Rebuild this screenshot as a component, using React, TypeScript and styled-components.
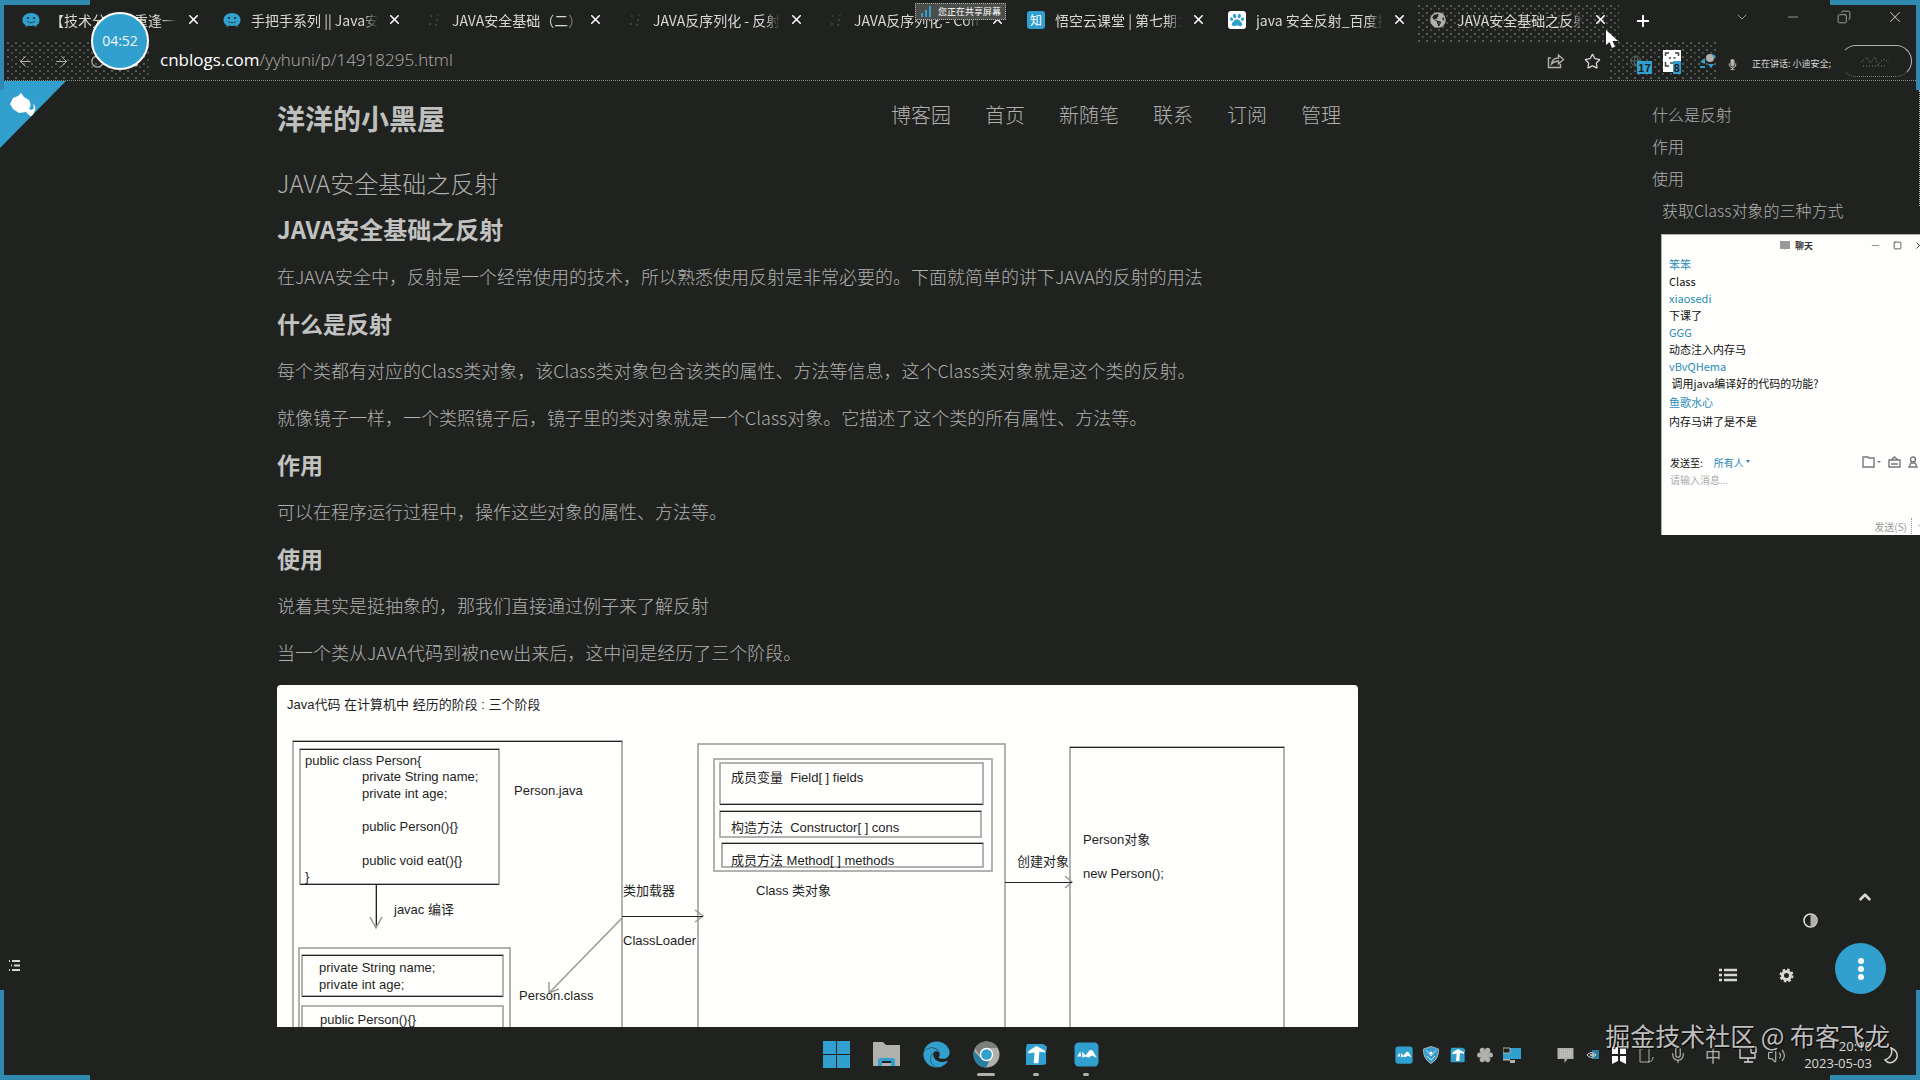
import React from "react";
import styled, { createGlobalStyle, css } from "styled-components";
import {
  ArrowLeft, ArrowRight, RotateCw, Lock, Plus, X, Minus, ChevronDown, ChevronUp, Copy, Star,
  Mic, Volume2, Globe, Square,
} from "lucide-react";
import { FaPaw, FaGlobeAmericas, FaEdge, FaMicrophone } from "react-icons/fa";

const bg = "#202220";
const gray = "#b0b1af";
const light = "#d8d9d7";
const blue = "#31a0cf";
const paper = "#fefefd";

const Global = createGlobalStyle`
  * { box-sizing: border-box; }
  body { margin: 0; background: ${bg}; overflow: hidden; font-family: "Noto Sans CJK SC", "Noto Sans", sans-serif; color: ${gray}; }
  button { border: 0; padding: 0; background: none; color: inherit; font: inherit; display: flex; align-items: center; justify-content: center; }
  a { color: inherit; text-decoration: none; }
  h1, h2, p, ul { margin: 0; padding: 0; list-style: none; }
  svg { flex: none; display: block; }
`;

const dots = css`
  background-image: radial-gradient(circle at 1px 1px, #6d6f6d 0.6px, transparent 1px), radial-gradient(circle at 5px 4px, #5a5c5a 0.6px, transparent 1px);
  background-size: 8px 7px;
`;

const Screen = styled.div`
  height: 100vh;
  display: flex;
  flex-direction: column;
  overflow: hidden;
`;

const TabBar = styled.div`
  display: flex;
  height: 42px;
  padding: 5px 0 0 11px;
`;
const Tab = styled.div<{ $active?: boolean }>`
  flex: 0 1 201px;
  min-width: 0;
  display: flex;
  align-items: center;
  padding: 0 11px 8px 11px;
  ${(p) => p.$active && dots}
`;
const Favicon = styled.span`
  width: 18px;
  height: 18px;
  margin-right: 10px;
  flex: none;
  display: flex;
  align-items: center;
  justify-content: center;
`;
const ZhiIcon = styled(Favicon)`
  background: ${blue};
  color: #fff;
  font-size: 12px;
  border-radius: 3px;
`;
const PawIcon = styled(Favicon)`
  background: #fff;
  color: ${blue};
  border-radius: 3px;
`;
const TabTitle = styled.button`
  flex: 1;
  min-width: 0;
  justify-content: flex-start;
  white-space: nowrap;
  overflow: hidden;
  font-size: 14px;
  line-height: 20px;
  color: ${light};
  mask-image: linear-gradient(90deg, #000 88%, transparent);
`;
const TabClose = styled.button`
  width: 16px;
  margin-left: 8px;
  color: #fff;
`;
const NewTab = styled.button`
  width: 36px;
  height: 31px;
  margin-left: 6px;
  color: #fff;
`;
const WindowButtons = styled.div`
  margin-left: auto;
  display: flex;
  height: 24px;
`;
const WindowButton = styled.button`
  width: 51px;
`;

const Toolbar = styled.div`
  height: 39px;
  flex: none;
  display: flex;
  align-items: center;
  padding-left: 16px;
  border-bottom: 1px dotted #8c8e8c;
`;
const ToolButton = styled.button<{ $w?: number }>`
  width: ${(p) => p.$w || 36}px;
  height: 24px;
  flex: none;
`;
const NavArea = styled.div`
  display: flex;
  width: 144px;
  height: 100%;
  align-items: center;
  margin-left: -9px;
  ${dots}
`;
const Address = styled.div`
  flex: 1;
  margin-left: 9px;
  padding-bottom: 2px;
  font-family: "Open Sans", "Noto Sans", sans-serif;
  font-size: 17px;
  line-height: 24px;
  font-weight: 300;
`;
const Domain = styled.span`
  color: #fff;
  font-weight: 400;
`;
const Extensions = styled.div`
  width: 106px;
  height: 100%;
  display: flex;
  align-items: center;
  gap: 18px;
  padding-left: 17px;
  ${dots}
`;
const ExtButton = styled.button`
  position: relative;
  width: 18px;
  height: 24px;
`;
const Badge = styled.span`
  position: absolute;
  left: 10px;
  top: 12px;
  padding: 0 1px;
  background: ${blue};
  color: ${bg};
  font-size: 11px;
  line-height: 13px;
  font-weight: 700;
`;
const Speaking = styled.div`
  width: 124px;
  display: flex;
  align-items: center;
  gap: 14px;
  padding: 6px 0 0 11px;
  font-size: 9px;
  line-height: 16px;
  color: ${light};
  white-space: nowrap;
`;
const UpdatePill = styled.button`
  width: 72px;
  height: 32px;
  margin-right: 8px;
  border: 1px solid ${gray};
  border-left-color: transparent;
  border-bottom: 1px dotted #777;
  border-radius: 16px;
`;

const Page = styled.main`
  flex: 1;
  min-height: 0;
  overflow: hidden;
  display: grid;
  grid-template-columns: 277px minmax(0, 1fr) 295px 267px;
  grid-template-rows: minmax(0, 100%);
`;
const LeftRail = styled.div`
  display: flex;
  flex-direction: column;
  justify-content: flex-end;
  padding-bottom: 54px;
`;
const RailButton = styled.button`
  width: 28px;
  height: 16px;
`;
const Content = styled.div`
  padding-top: 16px;
  min-width: 0;
`;
const BlogHeader = styled.header`
  display: flex;
  justify-content: space-between;
  padding-right: 17px;
`;
const BlogTitle = styled.a`
  font-size: 28px;
  line-height: 42px;
  font-weight: 700;
  color: #bfc0be;
`;
const BlogNav = styled.nav`
  display: flex;
  gap: 34px;
  font-size: 20px;
  line-height: 36px;
  font-weight: 300;
  height: 36px;
`;
const PostTitle = styled.h1`
  margin-top: 26px;
  font-size: 24px;
  line-height: 36px;
  font-weight: 300;
`;
const Article = styled.article`
  margin-top: 14px;
  display: flex;
  flex-direction: column;
  gap: 19px;
  font-size: 18px;
  line-height: 28px;
  font-weight: 300;
`;
const Heading = styled.h2<{ $large?: boolean }>`
  font-size: ${(p) => (p.$large ? 24 : 23)}px;
  line-height: 28px;
  font-weight: 700;
  color: #c2c3c1;
`;
const Figure = styled.svg`
  width: 1081px;
  height: 400px;
  background: ${paper};
  border-radius: 4px;
  font-family: "Liberation Sans", "Noto Sans CJK SC", sans-serif;
  font-size: 13px;
  font-weight: 400;
  text {
    fill: #1e1f1e;
    white-space: pre;
  }
`;
const Toc = styled.nav`
  grid-column: 4;
  padding-top: 17px;
  margin-left: -1px;
  font-size: 16px;
  line-height: 32px;
  font-weight: 300;
`;
const TocLink = styled.a<{ $sub?: boolean }>`
  display: block;
  padding-left: ${(p) => (p.$sub ? 10 : 0)}px;
`;

const Taskbar = styled.footer`
  height: 53px;
  flex: none;
  display: grid;
  grid-template-columns: 1fr auto 1fr;
`;
const Apps = styled.div`
  grid-column: 2;
  display: flex;
  padding-left: 2px;
`;
const AppButton = styled.button<{ $mark?: number }>`
  width: 50px;
  height: 53px;
  flex-direction: column;
  padding-top: 12px;
  justify-content: flex-start;
  color: ${blue};
  &::after {
    content: "";
    width: ${(p) => p.$mark || 0}px;
    height: 3px;
    margin-top: 4px;
    border-radius: 2px;
    background: ${gray};
  }
`;
const AppIcon = styled.span`
  height: 30px;
  display: flex;
  align-items: center;
`;
const Tray = styled.div`
  display: flex;
  justify-content: flex-end;
  align-items: center;
  padding: 3px 22px 0 0;
`;
const TrayGroup = styled.div<{ $gap: number; $end: number }>`
  display: flex;
  align-items: center;
  gap: ${(p) => p.$gap}px;
  margin-right: ${(p) => p.$end}px;
`;
const TrayButton = styled.button`
  width: 18px;
  height: 20px;
`;
const Clock = styled.div`
  width: 74px;
  margin-right: 12px;
  font-family: "Open Sans", sans-serif;
  font-size: 13px;
  line-height: 17px;
  text-align: right;
  color: ${light};
`;

const Ribbon = styled.a`
  position: absolute;
  left: 0;
  top: 81px;
  width: 66px;
  height: 67px;
  background: ${blue};
  clip-path: polygon(0 0, 100% 0, 0 100%);
  padding: 11px 0 0 9px;
`;
const Timer = styled.div`
  position: absolute;
  left: 91px;
  top: 12px;
  width: 58px;
  height: 58px;
  border: 2px solid #fff;
  border-radius: 50%;
  background: ${blue};
  color: #f2f6f8;
  font-family: "Open Sans", sans-serif;
  font-size: 14px;
  line-height: 54px;
  text-align: center;
`;
const ShareBadge = styled.div`
  position: absolute;
  left: calc(50% - 45px);
  top: 3px;
  width: 91px;
  height: 17px;
  display: flex;
  align-items: center;
  gap: 6px;
  padding-left: 5px;
  background: #4c4e4c;
  border: 1px dotted ${gray};
  color: #fff;
  font-size: 9px;
  line-height: 14px;
  white-space: nowrap;
`;
const Cursor = styled.svg`
  position: absolute;
  left: 1606px;
  top: 30px;
`;
const Corner = styled.span<{ $v: "top" | "bottom"; $h: "left" | "right" }>`
  position: absolute;
  ${(p) => p.$v}: 0;
  ${(p) => p.$h}: 0;
  width: 90px;
  height: 90px;
  border: 0 solid #2f89b0;
  border-${(p) => p.$v}-width: 5px;
  border-${(p) => p.$h}-width: 4px;
  pointer-events: none;
`;
const ScrollThumb = styled.span`
  position: absolute;
  right: 0;
  top: 90px;
  height: 116px;
  border-right: 1px dotted ${gray};
`;

const ChatWindow = styled.section`
  position: absolute;
  top: 234px;
  right: -12px;
  width: 271px;
  height: 301px;
  display: flex;
  flex-direction: column;
  background: ${paper};
  border-top: 1px solid ${gray};
  border-left: 1px solid ${gray};
  color: #111;
  font-size: 11px;
  line-height: 17px;
`;
const ChatHeader = styled.div`
  display: flex;
  align-items: center;
  height: 21px;
  padding-right: 2px;
  color: #333;
`;
const ChatTitle = styled.div`
  margin-left: 118px;
  margin-right: auto;
  display: flex;
  align-items: center;
  gap: 5px;
  font-size: 9px;
  font-weight: 700;
`;
const ChatControl = styled.button`
  width: 22px;
  height: 20px;
`;
const Messages = styled.ul`
  padding-left: 7px;
  flex: 1;
`;
const Message = styled.li<{ $loose?: boolean }>`
  line-height: ${(p) => (p.$loose ? 19 : 17)}px;
  padding-top: ${(p) => (p.$loose ? 1 : 0)}px;
`;
const Sender = styled.div`
  color: #2a8bb5;
`;
const SendRow = styled.div`
  display: flex;
  align-items: center;
  height: 20px;
  padding: 0 14px 0 8px;
  font-size: 10px;
`;
const Recipient = styled.select`
  appearance: none;
  border: 0;
  background: none;
  color: #2a8bb5;
  font: inherit;
  font-size: 10px;
  width: 32px;
  padding: 0;
  margin-left: 11px;
`;
const Caret = styled.span`
  border: 2px solid transparent;
  border-top: 3px solid #2a8bb5;
  margin-right: auto;
`;
const ChatIcons = styled.div`
  display: flex;
  gap: 7px;
  color: #777;
`;
const ChatInput = styled.textarea`
  border: 0;
  resize: none;
  height: 45px;
  padding: 0 8px;
  background: none;
  font: inherit;
  font-size: 10px;
  line-height: 16px;
  outline: 0;
  &::placeholder { color: #aaa; opacity: 1; }
`;
const SendBar = styled.div`
  display: flex;
  justify-content: flex-end;
  align-items: center;
  gap: 4px;
  height: 18px;
  padding-right: 6px;
  color: #999;
  font-size: 10px;
`;
const SendDivider = styled.span`
  height: 16px;
  border-left: 1px dotted #999;
`;

const FabPanel = styled.div`
  position: absolute;
  right: 34px;
  bottom: 85px;
  width: 170px;
  height: 112px;
`;
const Fab = styled.button<{ $x: number; $y: number }>`
  position: absolute;
  left: ${(p) => p.$x}px;
  top: ${(p) => p.$y}px;
  width: 24px;
  height: 24px;
  color: ${light};
`;
const MainFab = styled.button`
  position: absolute;
  right: 0;
  bottom: 1px;
  width: 51px;
  height: 51px;
  border-radius: 50%;
  background: ${blue};
`;
const Watermark = styled.div`
  position: absolute;
  right: 30px;
  bottom: 26px;
  font-size: 25px;
  line-height: 38px;
  color: rgba(214, 215, 214, 0.9);
  text-shadow: 1px 1px 1px #000;
  white-space: nowrap;
`;

const Blob = () => (
  <svg width="18" height="16" viewBox="0 0 18 16">
    <path d="M9 1c5 0 8.500 3 8.500 7 0 3-1.500 4.500-3 5v2l-3-1.500-2.500.5-2.500-.5L3.500 15v-2C1.500 12 .5 10.500.5 8 .5 4 4 1 9 1z" fill={blue} />
    <circle cx="6" cy="6" r="1" fill={bg} /><circle cx="12" cy="6" r="1" fill={bg} />
    <path d="M5 9.500q4 3 8 0" stroke={bg} strokeWidth=".7" fill="none" />
  </svg>
);
const Spinner = () => (
  <svg width="16" height="16" viewBox="0 0 16 16" fill="#666">
    <circle cx="6" cy="4" r=".7" /><circle cx="5" cy="12" r=".8" /><circle cx="12" cy="8" r=".8" /><circle cx="13" cy="3" r=".6" /><circle cx="11" cy="13" r=".8" />
  </svg>
);
const ShareIcon = () => (
  <svg width="18" height="16" viewBox="0 0 18 16" fill="none" stroke={gray} strokeWidth="1.400">
    <path d="M4 5H1.500v9.500h12V11M4.500 11c.5-4 3-6 7-6V2l5 4.500-5 4.500V8c-3 0-5 1-7 3z" />
  </svg>
);
const TLogo = ({ size }: { size: number }) => (
  <svg width={size} height={size} viewBox="0 0 24 24">
    <path d="M2 1h17l4 3-1 6v12q-2 1-5 1H1V6z" fill={blue} />
    <path d="M12 3l9 5v2l-6-1-1 12H9l1-11-7 1 1-3z" fill="#fff" />
  </svg>
);
const WaveLogo = ({ size }: { size: number }) => (
  <svg width={size} height={size} viewBox="0 0 24 24">
    <rect x=".5" y=".5" width="23" height="23" rx="4" fill={blue} />
    <path d="M3 14l3-5 1 5zM8 15V9l3 4 4-5q3-1 4 2l3 5-5-2-3 2-3-1z" fill="#fff" />
  </svg>
);
const FolderLogo = () => (
  <svg width="27" height="26" viewBox="0 0 27 26">
    <path d="M0 1h10l3 3h14v21H0z" fill={gray} />
    <path d="M5 25v-5q0-3 3-3h11q3 0 3 3v5h-4v-3H9v3z" fill={blue} /><path d="M9 20h9v2H9z" fill={bg} />
  </svg>
);
const ChromeLogo = () => (
  <svg width="27" height="27" viewBox="0 0 27 27">
    <circle cx="13.500" cy="13.500" r="13" fill={gray} />
    <path d="M1 10a13 13 0 0 0 12 16.500l3-6-9-4z" fill="#277ea3" />
    <path d="M2 8a13 13 0 0 1 23-1H13q-5 1-6 7z" fill="#7d7f7d" />
    <circle cx="13.500" cy="13.500" r="6.700" fill="#fff" /><circle cx="13.500" cy="13.500" r="5.300" fill={blue} />
  </svg>
);
const Shield = () => (
  <svg width="16" height="18" viewBox="0 0 16 18">
    <path d="M8 .5l7.500 2.500q.5 10-7.500 14.500Q0 13 .5 3z" fill={blue} stroke={gray} /><path d="M3 4l5 6 5-6M4 10l4 4 4-4" fill="none" stroke={light} /><circle cx="8" cy="7" r="1.500" fill="#fff" />
  </svg>
);
const Flower = () => (
  <svg width="16" height="16" viewBox="0 0 16 16" fill={gray}>
    {[0, 1, 2, 3, 4, 5].map((i) => <circle key={i} cx={8 + 5.3 * Math.cos((i * Math.PI) / 3)} cy={8 + 5.3 * Math.sin((i * Math.PI) / 3)} r="2.600" />)}
    <circle cx="8" cy="8" r="4" />
  </svg>
);
const ScreenIcon = () => (
  <svg width="18" height="16" viewBox="0 0 18 16"><path d="M0 1h18v11H0z" fill={blue} /><path d="M0 1h7v5H0z" fill={bg} stroke={gray} /><path d="M7 13h5v3H7zM0 12h7v1.500H0z" fill={gray} /></svg>
);
const BubbleIcon = () => (
  <svg width="17" height="16" viewBox="0 0 17 16"><path d="M.5 1h16v11h-6l-3 4v-4h-7z" fill={gray} /><path d="M3 4h11M3 6.500h11M3 9h11" stroke={light} strokeDasharray="1 1" /></svg>
);
const EyeIcon = () => (
  <svg width="13" height="10" viewBox="0 0 13 10"><path d="M6 0h7v9H6z" fill="#277ea3" /><path d="M1 5q4-5 9 0-5 5-9 0zm3 0q2-2 4 0-2 2-4 0z" fill="none" stroke={light} /></svg>
);
const FlagIcon = () => (
  <svg width="14" height="17" viewBox="0 0 14 17"><path d="M0 0h6v7H0zM8 0h6v7H8zM0 9h6v5l-6 3zM8 9h6v8l-6-3z" fill="#fff" /></svg>
);
const DeviceIcon = () => (
  <svg width="15" height="18" viewBox="0 0 15 18" fill="none" stroke={gray}><path d="M1 1h9v15H1zM14 11q0 5-5 5M3 3v1" /></svg>
);
const NetIcon = () => (
  <svg width="18" height="18" viewBox="0 0 18 18" fill="none" stroke={light} strokeWidth="1.300"><path d="M12 2H1v10h15V8M5 16h9M9 12v4" /><rect x="12" y="1" width="5" height="6" rx="1" /></svg>
);
const MoreDots = () => (
  <svg width="8" height="24" viewBox="0 0 8 24" fill="#fff"><circle cx="4" cy="4" r="3" /><circle cx="4" cy="12" r="3" /><circle cx="4" cy="20" r="3" /></svg>
);
const GearIcon = () => (
  <svg width="15" height="15" viewBox="0 0 15 15">
    <circle cx="7.500" cy="7.500" r="6" fill="none" stroke={light} strokeWidth="2" strokeDasharray="2.600 2.100" />
    <circle cx="7.500" cy="7.500" r="4" fill="none" stroke={light} strokeWidth="3" />
  </svg>
);
const HalfIcon = () => (
  <svg width="15" height="15" viewBox="0 0 15 15"><circle cx="7.500" cy="7.500" r="6.500" fill="none" stroke={light} strokeWidth="1.600" /><path d="M7.500 1a6.500 6.500 0 0 1 0 13z" fill={gray} /></svg>
);
const ListIcon = () => (
  <svg width="18" height="14" viewBox="0 0 18 14" stroke={light} strokeWidth="2.400"><path d="M0 2h3M5 2h13M0 7h3M5 7h13M0 12h3M5 12h13" /></svg>
);
const RailIcon = () => (
  <svg width="11" height="12" viewBox="0 0 11 12" stroke={light} strokeWidth="2"><path d="M3 2h8M5 6.500h6M3 11h8M0 2h1M2 6.500h1M0 11h1" /></svg>
);

const tabs: { title: string; icon: React.ReactNode; active?: boolean }[] = [
  { title: "【技术分享】重逢一", icon: <Favicon><Blob /></Favicon> },
  { title: "手把手系列 || Java安", icon: <Favicon><Blob /></Favicon> },
  { title: "JAVA安全基础（二）", icon: <Favicon><Spinner /></Favicon> },
  { title: "JAVA反序列化 - 反射", icon: <Favicon><Spinner /></Favicon> },
  { title: "JAVA反序列化 - Com", icon: <Favicon><Spinner /></Favicon> },
  { title: "悟空云课堂 | 第七期：", icon: <ZhiIcon>知</ZhiIcon> },
  { title: "java 安全反射_百度搜", icon: <PawIcon><FaPaw size={14} /></PawIcon> },
  { title: "JAVA安全基础之反射", icon: <Favicon><FaGlobeAmericas size={16} /></Favicon>, active: true },
];

const chat = [
  { who: "笨笨", text: "Class" },
  { who: "xiaosedi", text: "下课了" },
  { who: "GGG", text: "动态注入内存马" },
  { who: "vBvQHema", text: "\u00a0调用java编译好的代码的功能?" },
  { who: "鱼歌水心", text: "内存马讲了是不是", loose: true },
];

/* Stages a Java class goes through, from source file to object. */
const Diagram = () => (
  <Figure viewBox="0 0 1081 400" role="img" aria-label="Java代码 在计算机中 经历的阶段">
    <g fill="none" stroke="#999a98" strokeWidth="1.500">
      <path d="M16 400V56H345V400" />
      <rect x="23" y="64" width="199" height="135" />
      <path d="M22 400V263H233V400M25 400V321H226V400" />
      <rect x="25" y="270" width="201" height="41" />
      <path d="M421 400V59H728V400" />
      <rect x="437" y="74" width="278" height="112" />
      <rect x="443" y="78" width="263" height="41" />
      <rect x="443" y="126" width="261" height="26" />
      <rect x="445" y="158" width="261" height="24" />
      <path d="M793 400V62H1007V400" />
      <path d="M345 233L273 307M272 297V308L282 304" />
      <path d="M99 199V242M93 232L99 243L105 232" />
      <path d="M418 225L426 231L418 237M788 191L795 197L788 203" />
    </g>
    <g fill="none" stroke="#222" strokeWidth="1">
      <path d="M16 56.500H345M25 270.500H226M25 311.500H226M443 119.500H706M443 126.500H704M445 158.500H706M345 231.500H426M728 197.500H795M793 62.500H1007M99.500 199V240M23 64.500H222M23 199.500H222" />
    </g>
    <text x="10" y="24">Java代码 在计算机中 经历的阶段 : 三个阶段</text>
    <text x="28" y="80">{"public class Person{"}</text>
    <text x="85" y="96">private String name;</text>
    <text x="85" y="113">private int age;</text>
    <text x="85" y="146">{"public Person(){}"}</text>
    <text x="85" y="180">{"public void eat(){}"}</text>
    <text x="28" y="196">{"}"}</text>
    <text x="237" y="110">Person.java</text>
    <text x="117" y="229">javac 编译</text>
    <text x="42" y="287">private String name;</text>
    <text x="42" y="304">private int age;</text>
    <text x="43" y="339">{"public Person(){}"}</text>
    <text x="242" y="315">Person.class</text>
    <text x="346" y="210">类加载器</text>
    <text x="346" y="260">ClassLoader</text>
    <text x="454" y="97">成员变量  Field[ ] fields</text>
    <text x="454" y="147">构造方法  Constructor[ ] cons</text>
    <text x="454" y="180">成员方法 Method[ ] methods</text>
    <text x="479" y="210">Class 类对象</text>
    <text x="740" y="181">创建对象</text>
    <text x="806" y="159">Person对象</text>
    <text x="806" y="193">new Person();</text>
  </Figure>
);

export default function App() {
  return (
    <Screen>
      <Global />
      <TabBar>
        {tabs.map((t) => (
          <Tab key={t.title} $active={t.active}>
            {t.icon}
            <TabTitle>{t.title}</TabTitle>
            <TabClose aria-label="关闭标签页"><X size={15} strokeWidth={2.5} /></TabClose>
          </Tab>
        ))}
        <NewTab aria-label="新标签页"><Plus size={18} strokeWidth={2.5} /></NewTab>
        <WindowButtons>
          <WindowButton aria-label="搜索标签页"><ChevronDown size={16} strokeWidth={1.2} /></WindowButton>
          <WindowButton aria-label="最小化"><Minus size={16} strokeWidth={1.2} /></WindowButton>
          <WindowButton aria-label="还原"><Copy size={14} strokeWidth={1.5} transform="scale(-1 1)" /></WindowButton>
          <WindowButton aria-label="关闭"><X size={18} strokeWidth={1.4} /></WindowButton>
        </WindowButtons>
      </TabBar>
      <Toolbar>
        <NavArea>
          <ToolButton aria-label="后退"><ArrowLeft size={17} strokeWidth={1.4} /></ToolButton>
          <ToolButton aria-label="前进"><ArrowRight size={17} strokeWidth={1.4} /></ToolButton>
          <ToolButton aria-label="刷新"><RotateCw size={15} /></ToolButton>
          <ToolButton aria-label="网站信息"><Lock size={12} fill={gray} /></ToolButton>
        </NavArea>
        <Address role="textbox" aria-label="地址"><Domain>cnblogs.com</Domain>/yyhuni/p/14918295.html</Address>
        <ToolButton aria-label="分享"><ShareIcon /></ToolButton>
        <ToolButton aria-label="收藏"><Star size={17} strokeWidth={1.8} color={light} /></ToolButton>
        <Extensions>
          <ExtButton aria-label="扩展一"><Globe size={12} color="#50685a" /><Badge>17</Badge></ExtButton>
          <ExtButton aria-label="扩展二">
            <svg width="18" height="22" viewBox="0 0 18 22"><path d="M0 0h18v22H0z" fill="#fff" /><path d="M2.500 6V3H6M12 3h3.500v3M6 8h2M10.500 8h2M7 13h4M2.500 12v4H6" stroke="#444" strokeWidth="1.500" fill="none" /></svg>
            <Badge>8</Badge>
          </ExtButton>
          <ExtButton aria-label="扩展三">
            <svg width="16" height="16" viewBox="0 0 16 16"><circle cx="11" cy="5" r="4" fill={gray} /><path d="M1 9l5-4v6zM9 11h6l-3 4zM1 13h5v2H1zM12 1l4 1v4z" fill={blue} /></svg>
          </ExtButton>
        </Extensions>
        <Speaking><FaMicrophone size={11} color={gray} />正在讲话: 小迪安全;</Speaking>
        <UpdatePill aria-label="更新">
          <svg width="32" height="14" viewBox="0 0 32 14" fill="none" stroke="#808280" strokeDasharray="1 2"><path d="M1 8l6-5 3 6 5-6 3 8 5-6 6 3M3 12h24" /></svg>
        </UpdatePill>
      </Toolbar>
      <Page>
        <LeftRail><RailButton aria-label="目录"><RailIcon /></RailButton></LeftRail>
        <Content>
          <BlogHeader>
            <BlogTitle href="#">洋洋的小黑屋</BlogTitle>
            <BlogNav>
              {["博客园", "首页", "新随笔", "联系", "订阅", "管理"].map((n) => <a key={n} href="#">{n}</a>)}
            </BlogNav>
          </BlogHeader>
          <PostTitle>JAVA安全基础之反射</PostTitle>
          <Article>
            <Heading $large>JAVA安全基础之反射</Heading>
            <p>在JAVA安全中，反射是一个经常使用的技术，所以熟悉使用反射是非常必要的。下面就简单的讲下JAVA的反射的用法</p>
            <Heading>什么是反射</Heading>
            <p>每个类都有对应的Class类对象，该Class类对象包含该类的属性、方法等信息，这个Class类对象就是这个类的反射。</p>
            <p>就像镜子一样，一个类照镜子后，镜子里的类对象就是一个Class对象。它描述了这个类的所有属性、方法等。</p>
            <Heading>作用</Heading>
            <p>可以在程序运行过程中，操作这些对象的属性、方法等。</p>
            <Heading>使用</Heading>
            <p>说着其实是挺抽象的，那我们直接通过例子来了解反射</p>
            <p>当一个类从JAVA代码到被new出来后，这中间是经历了三个阶段。</p>
            <Diagram />
          </Article>
        </Content>
        <Toc>
          <TocLink href="#">什么是反射</TocLink>
          <TocLink href="#">作用</TocLink>
          <TocLink href="#">使用</TocLink>
          <TocLink href="#" $sub>获取Class对象的三种方式</TocLink>
        </Toc>
      </Page>
      <Taskbar>
        <Apps>
          <AppButton aria-label="开始"><AppIcon><svg width="27" height="27" viewBox="0 0 27 27" fill={blue}><path d="M0 0h13v13H0zM14 0h13v13H14zM0 14h13v13H0zM14 14h13v13H14z" /></svg></AppIcon></AppButton>
          <AppButton aria-label="文件资源管理器"><AppIcon><FolderLogo /></AppIcon></AppButton>
          <AppButton aria-label="Edge"><AppIcon><FaEdge size={27} color={blue} /></AppIcon></AppButton>
          <AppButton aria-label="Chrome" $mark={18}><AppIcon><ChromeLogo /></AppIcon></AppButton>
          <AppButton aria-label="Typora" $mark={6}><AppIcon><TLogo size={23} /></AppIcon></AppButton>
          <AppButton aria-label="会议" $mark={6}><AppIcon><WaveLogo size={25} /></AppIcon></AppButton>
        </Apps>
        <Tray>
          <TrayGroup $gap={9} $end={35}>
            <TrayButton aria-label="会议"><WaveLogo size={18} /></TrayButton>
            <TrayButton aria-label="安全"><Shield /></TrayButton>
            <TrayButton aria-label="T"><TLogo size={16} /></TrayButton>
            <TrayButton aria-label="花"><Flower /></TrayButton>
            <TrayButton aria-label="屏幕"><ScreenIcon /></TrayButton>
          </TrayGroup>
          <TrayGroup $gap={9} $end={14}>
            <TrayButton aria-label="消息"><BubbleIcon /></TrayButton>
            <TrayButton aria-label="显卡"><EyeIcon /></TrayButton>
            <TrayButton aria-label="书签"><FlagIcon /></TrayButton>
            <TrayButton aria-label="设备"><DeviceIcon /></TrayButton>
          </TrayGroup>
          <TrayGroup $gap={17} $end={10}>
            <TrayButton aria-label="麦克风"><Mic size={18} strokeWidth={1.6} /></TrayButton>
            <TrayButton aria-label="输入法">中</TrayButton>
            <TrayButton aria-label="网络"><NetIcon /></TrayButton>
          </TrayGroup>
          <TrayGroup $gap={0} $end={13}>
            <TrayButton aria-label="音量"><Volume2 size={19} strokeWidth={1.5} /></TrayButton>
          </TrayGroup>
          <Clock>20:10<br />2023-05-03</Clock>
          <svg width="14" height="17" viewBox="0 0 14 17" fill="none" stroke={light} strokeWidth="1.400"><path d="M7 1q3 8-6 12 3 4 8 2 5-3 4-8-1-4-6-6z" /></svg>
        </Tray>
      </Taskbar>

      <Ribbon href="#" aria-label="GitHub">
        <svg width="28" height="26" viewBox="0 0 28 26" fill="#fff"><path d="M12 1l3 4 5 3q3 5 0 9l3 1q3-2 1-7l2 3q1 4-1 6l-1 5-3-1-4-4-7 1-6-4-3-5 3-6 5-2z" /></svg>
      </Ribbon>
      <Timer>04:52</Timer>
      <ShareBadge>
        <svg width="11" height="11" viewBox="0 0 11 11" fill={blue}><path d="M0 7h2v4H0zM4 4h2v7H4zM8 0h2v11H8z" /></svg>
        您正在共享屏幕
      </ShareBadge>
      <Cursor width="12" height="18" viewBox="0 0 12 18"><path d="M0 0v15l3.500-3L6 18l3-1.500L6.500 11H12z" fill="#fff" /></Cursor>

      <ChatWindow>
        <ChatHeader>
          <ChatTitle>
            <svg width="10" height="9" viewBox="0 0 10 9"><path d="M0 0h10v8H5L4 9V8H0z" fill="#999" /></svg>
            聊天
          </ChatTitle>
          <ChatControl aria-label="最小化"><Minus size={11} color="#888" /></ChatControl>
          <ChatControl aria-label="最大化"><Square size={9} /></ChatControl>
          <ChatControl aria-label="关闭"><X size={11} /></ChatControl>
        </ChatHeader>
        <Messages>
          {chat.map((m) => (
            <Message key={m.who} $loose={m.loose}><Sender>{m.who}</Sender>{m.text}</Message>
          ))}
        </Messages>
        <SendRow>
          <label htmlFor="to">发送至:</label>
          <Recipient id="to"><option>所有人</option></Recipient>
          <Caret />
          <ChatIcons>
            <svg width="19" height="12" viewBox="0 0 19 12" fill="none" stroke="currentColor" strokeWidth="1.400"><path d="M1 1h5l1 1h5v9H1z" /><path d="M15 5h4l-2 2z" fill="currentColor" stroke="none" /></svg>
            <svg width="13" height="12" viewBox="0 0 13 12" fill="none" stroke="currentColor" strokeWidth="1.400"><path d="M1 4h11v7H1zM3 4l3.500-3L10 4M3 8h7" /></svg>
            <svg width="10" height="12" viewBox="0 0 10 12" fill="none" stroke="currentColor" strokeWidth="1.400"><circle cx="5" cy="3.500" r="2.500" /><path d="M1 11l2-4h4l2 4z" /></svg>
          </ChatIcons>
        </SendRow>
        <ChatInput aria-label="消息" placeholder="请输入消息..." />
        <SendBar><button>发送(S)</button><SendDivider /><ChevronDown size={10} /></SendBar>
      </ChatWindow>

      <FabPanel>
        <Fab $x={137} $y={2} aria-label="回到顶部"><ChevronUp size={18} strokeWidth={3.5} /></Fab>
        <Fab $x={82} $y={25} aria-label="切换模式"><HalfIcon /></Fab>
        <Fab $x={0} $y={80} aria-label="目录"><ListIcon /></Fab>
        <Fab $x={58} $y={80} aria-label="设置"><GearIcon /></Fab>
        <MainFab aria-label="更多"><MoreDots /></MainFab>
      </FabPanel>
      <Watermark>掘金技术社区 @ 布客飞龙</Watermark>
      <ScrollThumb />
      <Corner $v="top" $h="left" />
      <Corner $v="top" $h="right" />
      <Corner $v="bottom" $h="left" />
      <Corner $v="bottom" $h="right" />
    </Screen>
  );
}
